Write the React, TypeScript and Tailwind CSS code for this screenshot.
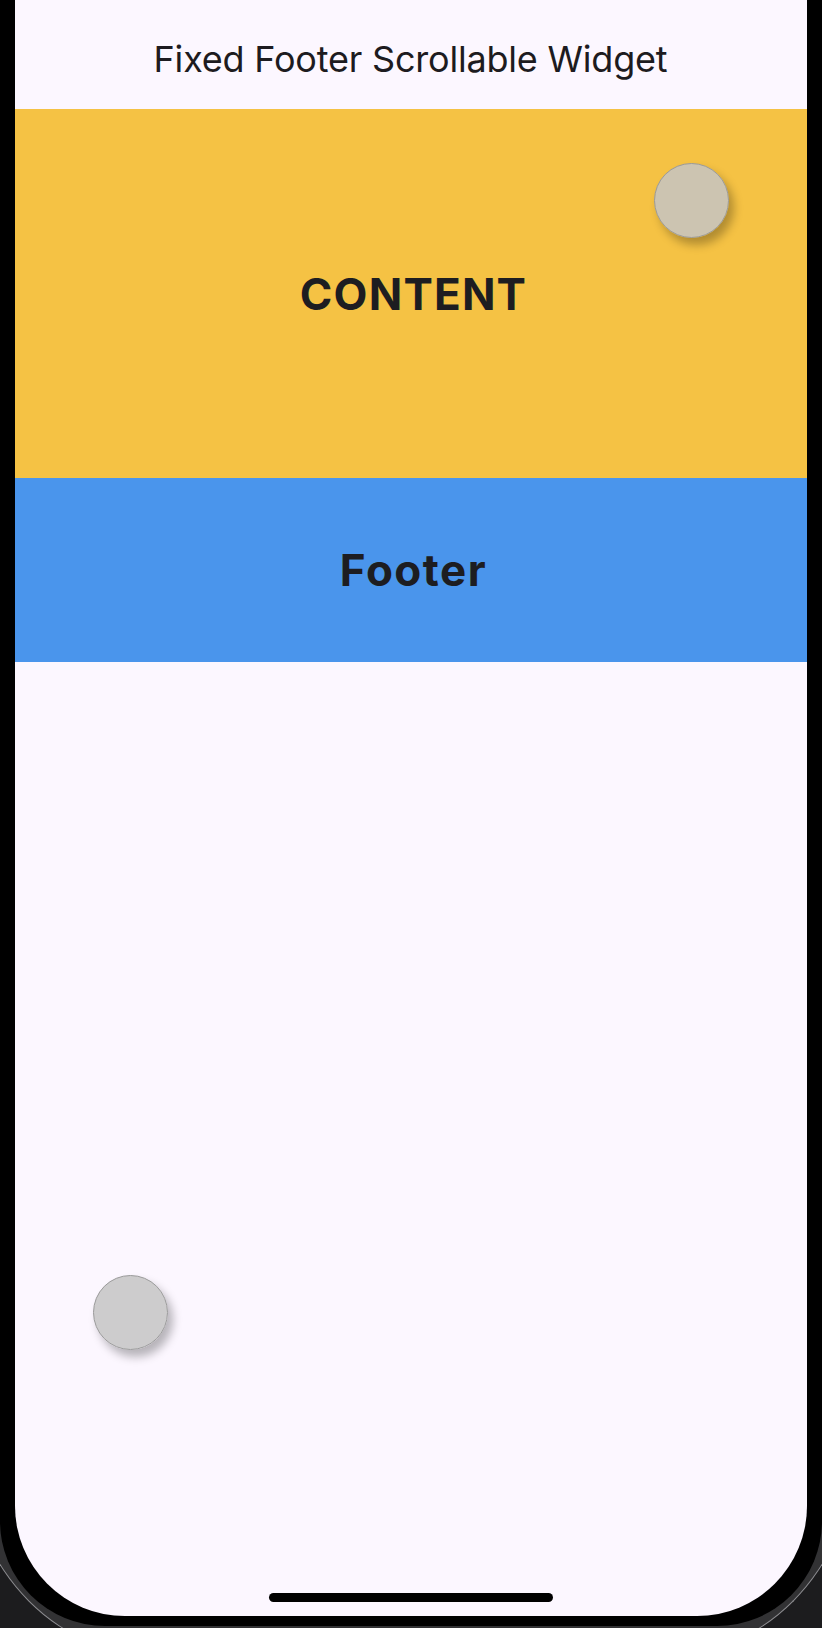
import React from "react";

export default function App() {
  return (
    <div className="relative w-[822px] h-[1628px] overflow-hidden bg-[#1c1c1e]" style={{ fontFamily: "Inter, 'Noto Sans', sans-serif" }}>
      {/* bezel ring */}
      <div className="-ml-[30px] w-[882px] h-[1660px] rounded-b-[200px] border-[1.5px] border-t-0 border-[#8e8e92] bg-[#323234]">
        {/* black frame */}
        <div className="ml-[28.5px] w-[822px] h-[1626px] rounded-b-[105px] bg-black pt-0">
          {/* screen */}
          <div className="relative ml-[15px] w-[792px] h-[1616px] rounded-b-[110px] overflow-hidden bg-[#fcf7ff] flex flex-col">
            <div className="h-[109px] flex items-center justify-center pt-[8px]">
              <span className="text-[36px] leading-none font-normal text-[#1d1b20] tracking-[-0.2px]">Fixed Footer Scrollable Widget</span>
            </div>
            <div className="h-[369px] bg-[#f5c244] flex items-center justify-center pl-[6px]">
              <span className="text-[44px] leading-none font-bold text-[#1d1d21] tracking-[1.2px]">CONTENT</span>
            </div>
            <div className="h-[184px] bg-[#4a95ec] flex items-center justify-center pl-[6px]">
              <span className="text-[44px] leading-none font-bold text-[#1d1d21] tracking-[1.5px]">Footer</span>
            </div>
            <div className="flex-1" />
            <div className="flex justify-center pb-[14px]">
              <div className="w-[284px] h-[9px] rounded-full bg-black" />
            </div>

            {/* floating circles */}
            <div className="absolute left-[639px] top-[163px] w-[75px] h-[75px] rounded-full border-[1.5px] border-[#9a9a9a] bg-[#c4c4c4]/85 shadow-[5px_7px_10px_rgba(0,0,0,0.28)]" />
            <div className="absolute left-[78px] top-[1275px] w-[75px] h-[75px] rounded-full border-[1.5px] border-[#9a9a9a] bg-[#c4c4c4]/85 shadow-[5px_7px_10px_rgba(0,0,0,0.28)]" />
          </div>
        </div>
      </div>
    </div>
  );
}
